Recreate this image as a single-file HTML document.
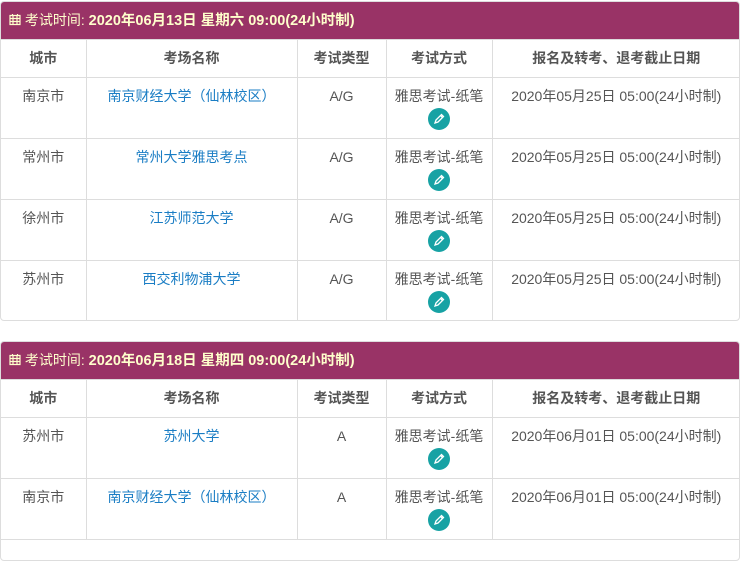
<!DOCTYPE html>
<html><head><meta charset="utf-8"><style>
body{margin:0;background:#fff;width:741px;height:540px;overflow:hidden;font-family:"Liberation Sans","Microsoft YaHei","Noto Sans CJK SC",sans-serif;font-size:14px;color:#555}
.panel{position:absolute;left:0;width:740px;border:1px solid #ddd;border-radius:4px;overflow:hidden;box-sizing:border-box}
.hd{height:37px;background:#993366;color:#ffffcc;font-size:14px;line-height:37px;padding-left:8px;box-sizing:border-box;white-space:nowrap}
.hd b{font-weight:bold;font-size:14.5px}
table{border-collapse:collapse;width:740px;table-layout:fixed}
td,th{border:1px solid #ddd;text-align:center;vertical-align:top;padding:0}
th{height:37px;line-height:37px;font-weight:bold;color:#555;font-size:14px;box-sizing:border-box}
td{height:61px;padding-top:10px;box-sizing:border-box;line-height:16px}
tr>*:first-child{border-left:none}
a{color:#1a7dc4;text-decoration:none}
.ic{display:block;margin:4px auto 0;width:22px;height:22px}
</style></head><body>
<svg width="0" height="0" style="position:absolute"><defs>
<symbol id="pen" viewBox="0 0 22 22"><circle cx="11" cy="11" r="11" fill="#17a2a4"/><path d="M7 15l1-3 5.5-5.5 2 2L10 14z" fill="none" stroke="#fff" stroke-width="1.3"/><path d="M12.5 7.5l2 2" stroke="#fff" stroke-width="1.3"/></symbol>
<symbol id="cal" viewBox="0 0 12 12"><path d="M1 2h10v9H1z M1 5h10 M1 8h10 M4 2v9 M8 2v9 M3.5 0.5v2 M8.5 0.5v2" fill="none" stroke="#ffffcc" stroke-width="1.2"/></symbol>
</defs></svg>

<div class="panel" style="top:1px;height:320px">
<div class="hd"><svg width="12" height="13" style="vertical-align:-1px"><use href="#cal"/></svg> 考试时间: <b>2020年06月13日 星期六 09:00(24小时制)</b></div>
<table><colgroup><col style="width:85px"><col style="width:211px"><col style="width:89px"><col style="width:106px"><col></colgroup>
<tr><th>城市</th><th>考场名称</th><th>考试类型</th><th>考试方式</th><th>报名及转考、退考截止日期</th></tr>
<tr><td>南京市</td><td><a>南京财经大学（仙林校区）</a></td><td>A/G</td><td>雅思考试-纸笔<svg class="ic"><use href="#pen"/></svg></td><td>2020年05月25日 05:00(24小时制)</td></tr>
<tr><td>常州市</td><td><a>常州大学雅思考点</a></td><td>A/G</td><td>雅思考试-纸笔<svg class="ic"><use href="#pen"/></svg></td><td>2020年05月25日 05:00(24小时制)</td></tr>
<tr><td>徐州市</td><td><a>江苏师范大学</a></td><td>A/G</td><td>雅思考试-纸笔<svg class="ic"><use href="#pen"/></svg></td><td>2020年05月25日 05:00(24小时制)</td></tr>
<tr><td>苏州市</td><td><a>西交利物浦大学</a></td><td>A/G</td><td>雅思考试-纸笔<svg class="ic"><use href="#pen"/></svg></td><td>2020年05月25日 05:00(24小时制)</td></tr>
</table></div>

<div class="panel" style="top:341px;height:220px">
<div class="hd"><svg width="12" height="13" style="vertical-align:-1px"><use href="#cal"/></svg> 考试时间: <b>2020年06月18日 星期四 09:00(24小时制)</b></div>
<table><colgroup><col style="width:85px"><col style="width:211px"><col style="width:89px"><col style="width:106px"><col></colgroup>
<tr><th>城市</th><th>考场名称</th><th>考试类型</th><th>考试方式</th><th>报名及转考、退考截止日期</th></tr>
<tr><td>苏州市</td><td><a>苏州大学</a></td><td>A</td><td>雅思考试-纸笔<svg class="ic"><use href="#pen"/></svg></td><td>2020年06月01日 05:00(24小时制)</td></tr>
<tr><td>南京市</td><td><a>南京财经大学（仙林校区）</a></td><td>A</td><td>雅思考试-纸笔<svg class="ic"><use href="#pen"/></svg></td><td>2020年06月01日 05:00(24小时制)</td></tr>
</table></div>
</body></html>
